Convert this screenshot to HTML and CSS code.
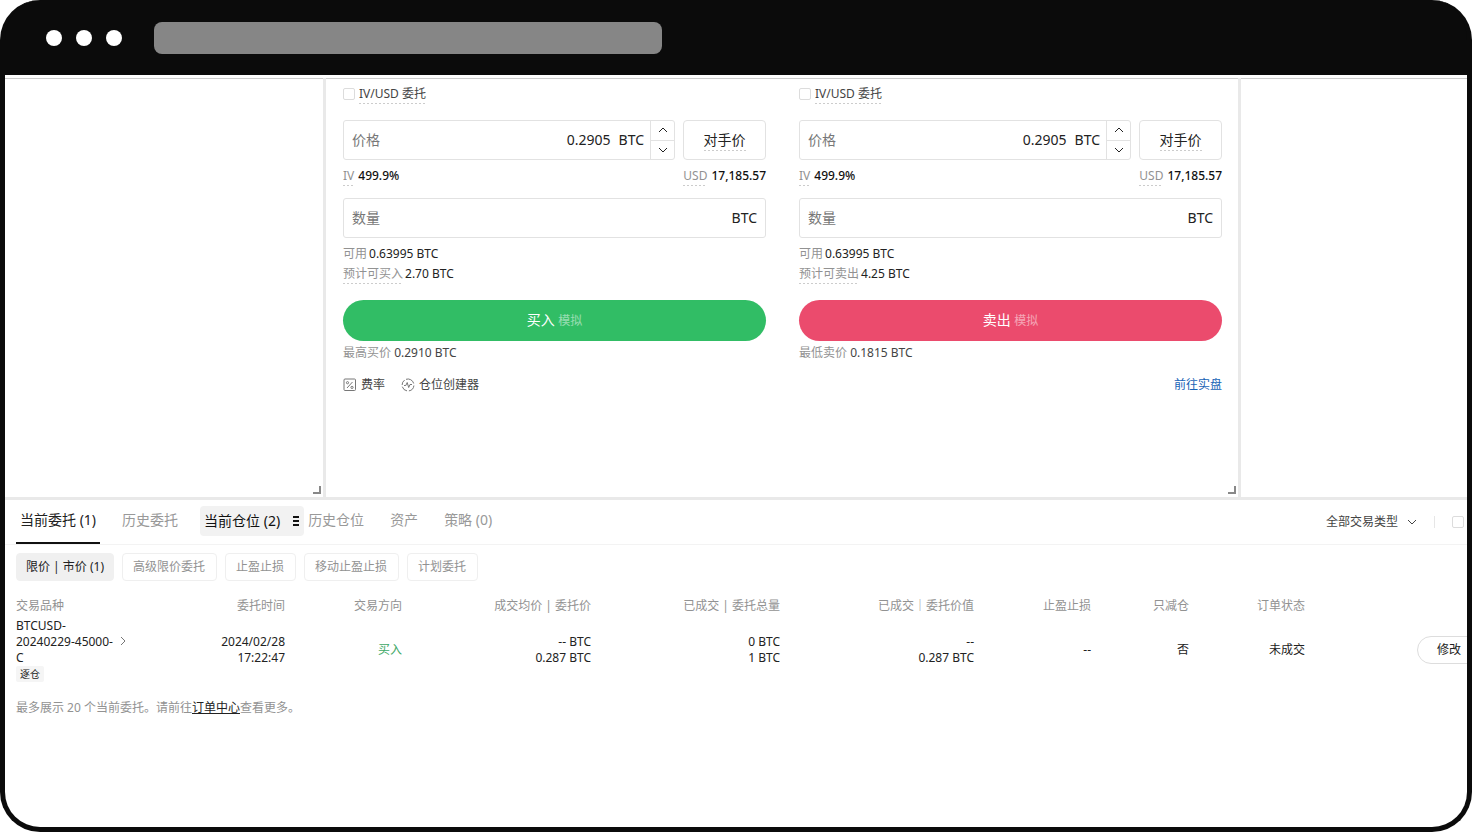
FILE: index.html
```html
<!DOCTYPE html>
<html lang="zh-CN">
<head>
<meta charset="utf-8">
<meta name="viewport" content="width=device-width, initial-scale=1">
<title>期权交易</title>
<link rel="stylesheet" href="styles.css">
</head>
<body>
<div class="window">
  <header class="titlebar">
    <div class="lights"><span class="light"></span><span class="light"></span><span class="light"></span></div>
    <div class="address"></div>
  </header>

  <div class="workspace">
    <aside class="pane">
      <svg class="resize" viewBox="0 0 8 8"><path d="M0 7h7V0"/></svg>
    </aside>

    <main class="pane pane-trade">
      <form class="order">
        <label class="check-row"><input class="checkbox" type="checkbox"><span class="hint">IV/USD 委托</span></label>
        <div class="price-row">
          <div class="field">
            <label class="field-label" for="buy-price">价格</label>
            <input class="field-input" id="buy-price" type="text" value="0.2905">
            <span class="unit">BTC</span>
            <div class="stepper">
              <button class="step" type="button" aria-label="增加"><svg class="chevron" viewBox="0 0 10 6"><path d="M1 5l4-4 4 4"/></svg></button>
              <button class="step" type="button" aria-label="减少"><svg class="chevron" viewBox="0 0 10 6"><path d="M1 1l4 4 4-4"/></svg></button>
            </div>
          </div>
          <button class="counter" type="button"><span class="hint">对手价</span></button>
        </div>
        <div class="quote-row">
          <span class="quote"><span class="muted hint">IV</span><b class="figure">499.9%</b></span>
          <span class="quote"><span class="muted hint">USD</span><b class="figure">17,185.57</b></span>
        </div>
        <div class="field field-amount">
          <label class="field-label" for="buy-amount">数量</label>
          <input class="field-input" id="buy-amount" type="text">
          <span class="unit">BTC</span>
        </div>
        <div class="info">
          <div class="info-row"><span class="muted">可用</span><span>0.63995 BTC</span></div>
          <div class="info-row"><span class="muted hint">预计可买入</span><span>2.70 BTC</span></div>
        </div>
        <button class="submit submit-buy" type="button">买入 <small class="demo">模拟</small></button>
        <div class="limit"><span class="muted">最高买价</span> 0.2910 BTC</div>
        <div class="tools">
          <a class="tool" href="#">
            <svg class="tool-icon" viewBox="0 0 14 14"><rect x="1" y="1" width="11.5" height="11.5" rx="1"/><path d="M4 10l5.500-6"/><circle cx="4.500" cy="4.700" r="1.100"/><circle cx="9" cy="9.400" r="1.100"/></svg>
            费率</a>
          <a class="tool" href="#">
            <svg class="tool-icon" viewBox="0 0 14 14"><path d="M5 1.300a6 6 0 0 1 7.700 4.200M12.900 7.500a6 6 0 0 1-5 5.400M6 12.900a6 6 0 0 1-4.700-4.200M1.100 7a6 6 0 0 1 2.500-4.900"/><path d="M3 7.500h1.800l1.400-3 1.500 5 1.300-3h2"/></svg>
            仓位创建器</a>
        </div>
      </form>

      <form class="order">
        <label class="check-row"><input class="checkbox" type="checkbox"><span class="hint">IV/USD 委托</span></label>
        <div class="price-row">
          <div class="field">
            <label class="field-label" for="sell-price">价格</label>
            <input class="field-input" id="sell-price" type="text" value="0.2905">
            <span class="unit">BTC</span>
            <div class="stepper">
              <button class="step" type="button" aria-label="增加"><svg class="chevron" viewBox="0 0 10 6"><path d="M1 5l4-4 4 4"/></svg></button>
              <button class="step" type="button" aria-label="减少"><svg class="chevron" viewBox="0 0 10 6"><path d="M1 1l4 4 4-4"/></svg></button>
            </div>
          </div>
          <button class="counter" type="button"><span class="hint">对手价</span></button>
        </div>
        <div class="quote-row">
          <span class="quote"><span class="muted hint">IV</span><b class="figure">499.9%</b></span>
          <span class="quote"><span class="muted hint">USD</span><b class="figure">17,185.57</b></span>
        </div>
        <div class="field field-amount">
          <label class="field-label" for="sell-amount">数量</label>
          <input class="field-input" id="sell-amount" type="text">
          <span class="unit">BTC</span>
        </div>
        <div class="info">
          <div class="info-row"><span class="muted">可用</span><span>0.63995 BTC</span></div>
          <div class="info-row"><span class="muted hint">预计可卖出</span><span>4.25 BTC</span></div>
        </div>
        <button class="submit submit-sell" type="button">卖出 <small class="demo">模拟</small></button>
        <div class="limit"><span class="muted">最低卖价</span> 0.1815 BTC</div>
        <div class="tools tools-end"><a class="live" href="#">前往实盘</a></div>
      </form>
      <svg class="resize" viewBox="0 0 8 8"><path d="M0 7h7V0"/></svg>
    </main>

    <aside class="pane"></aside>
  </div>

  <section class="orders">
    <div class="tabbar">
      <nav class="tabs">
        <button class="tab tab-active" type="button">当前委托 (1)</button>
        <button class="tab" type="button">历史委托</button>
        <button class="tab tab-drag" type="button">当前仓位 (2)
          <svg class="grip" viewBox="0 0 8 12"><path d="M1 2h6M1 6h6M1 10h6"/></svg></button>
        <button class="tab" type="button">历史仓位</button>
        <button class="tab" type="button">资产</button>
        <button class="tab" type="button">策略 (0)</button>
      </nav>
      <div class="filters">
        <label class="type">
          <select class="type-select" aria-label="交易类型"><option>全部交易类型</option></select>
          <svg class="chevron" viewBox="0 0 10 6"><path d="M1 1l4 4 4-4"/></svg>
        </label>
        <span class="divider"></span>
        <input class="checkbox" type="checkbox" aria-label="筛选">
      </div>
    </div>

    <div class="chips">
      <button class="chip chip-active" type="button">限价 | 市价 (1)</button>
      <button class="chip" type="button">高级限价委托</button>
      <button class="chip" type="button">止盈止损</button>
      <button class="chip" type="button">移动止盈止损</button>
      <button class="chip" type="button">计划委托</button>
    </div>

    <table class="table">
      <colgroup>
        <col class="c-name"><col class="c-time"><col class="c-side"><col class="c-wide"><col class="c-wide"><col class="c-value"><col class="c-stop"><col class="c-reduce"><col class="c-state"><col>
      </colgroup>
      <thead>
        <tr><th>交易品种</th><th>委托时间</th><th>交易方向</th><th>成交均价 | 委托价</th><th>已成交 | 委托总量</th><th>已成交｜委托价值</th><th>止盈止损</th><th>只减仓</th><th>订单状态</th><th></th></tr>
      </thead>
      <tbody>
        <tr>
          <td>
            <div class="symbol">BTCUSD-<br>20240229-45000-
              <svg class="go" viewBox="0 0 6 10"><path d="M1 1l4 4-4 4"/></svg><br>C</div>
            <span class="tag">逐仓</span>
          </td>
          <td>2024/02/28<br>17:22:47</td>
          <td class="buy">买入</td>
          <td>-- BTC<br>0.287 BTC</td>
          <td>0 BTC<br>1 BTC</td>
          <td>--<br>0.287 BTC</td>
          <td>--</td>
          <td>否</td>
          <td>未成交</td>
          <td><button class="edit" type="button">修改</button></td>
        </tr>
      </tbody>
    </table>
    <p class="note">最多展示 20 个当前委托。请前往<a class="note-link" href="#">订单中心</a>查看更多。</p>
  </section>
</div>
</body>
</html>
```
FILE: styles.css
```css
* {
  box-sizing: border-box;
}

body {
  margin: 0;
  background: #fff;
  color: #222;
  font: 12px/20px "Noto Sans", "Noto Sans CJK SC", sans-serif;
}

button,
input,
select {
  margin: 0;
  padding: 0;
  border: 0;
  background: none;
  color: inherit;
  font: inherit;
}

svg {
  fill: none;
  stroke: currentColor;
}

.window {
  display: flex;
  flex-direction: column;
  min-height: 100vh;
  overflow: hidden;
  border: solid #0b0b0b;
  border-width: 0 5px 5px;
  border-radius: 40px;
  background: #0b0b0b;
}

.titlebar {
  display: flex;
  align-items: center;
  gap: 32px;
  height: 75px;
  padding-left: 41px;
}

.lights {
  display: flex;
  gap: 14px;
}

.light {
  width: 16px;
  height: 16px;
  border-radius: 50%;
  background: #fff;
}

.address {
  flex: 0 1 508px;
  height: 32px;
  border-radius: 8px;
  background: #868686;
}

.workspace {
  display: grid;
  grid-template-columns: 318px 1fr 226px;
  gap: 3px;
  border-top: 3px solid #fff;
  border-bottom: 3px solid #e9e9e9;
  background: #e9e9e9;
}

.pane {
  position: relative;
  border-top: 1px solid #ccc;
  background: #fff;
}

.pane-trade {
  display: grid;
  grid-template-columns: 1fr 1fr;
  gap: 33px;
  padding: 5px 16px 102px 17px;
}

.resize {
  position: absolute;
  right: 2px;
  bottom: 3px;
  width: 8px;
  height: 8px;
  stroke: #888;
  stroke-width: 2;
}

.order {
  display: flex;
  flex-direction: column;
  min-width: 0;
}

.muted {
  color: #929292;
}

.hint {
  background: linear-gradient(90deg, #ccc 60%, transparent 0) 0 100% / 4px 1px repeat-x;
}

.check-row {
  display: flex;
  align-items: center;
  gap: 4px;
  color: #444;
}

.checkbox {
  flex: none;
  appearance: none;
  width: 12px;
  height: 12px;
  border: 1px solid #dcdcdc;
  border-radius: 2px;
}

.price-row {
  display: flex;
  gap: 8px;
  margin-top: 16px;
}

.field {
  display: flex;
  flex: 1;
  align-items: center;
  min-width: 0;
  height: 40px;
  border: 1px solid #e2e2e2;
  border-radius: 3px;
  padding-left: 8px;
  font-size: 14px;
}

.field-label {
  color: #777;
}

.field-input {
  flex: 1;
  min-width: 0;
  text-align: right;
}

.unit {
  padding: 0 6px 0 8px;
}

.stepper {
  display: flex;
  flex-direction: column;
  align-self: stretch;
  width: 24px;
  border-left: 1px solid #e2e2e2;
}

.step {
  display: flex;
  flex: 1;
  align-items: center;
  justify-content: center;
}

.step + .step {
  border-top: 1px solid #e2e2e2;
}

.chevron {
  width: 10px;
  height: 6px;
}

.counter {
  width: 83px;
  border: 1px solid #e2e2e2;
  border-radius: 4px;
  font-size: 14px;
}

.counter .hint {
  padding-bottom: 2px;
}

.quote-row {
  display: flex;
  justify-content: space-between;
  margin-top: 6px;
}

.quote {
  display: flex;
  gap: 4px;
}

.figure {
  font-weight: 500;
  color: #111;
}

.field-amount {
  flex: none;
  margin-top: 12px;
  padding-right: 2px;
}

.info {
  margin-top: 6px;
}

.info-row {
  display: flex;
  gap: 2px;
}

.submit {
  height: 41px;
  margin-top: 16px;
  border-radius: 21px;
  color: #fff;
  font-size: 14px;
}

.submit-buy {
  background: #31bd65;
}

.submit-sell {
  background: #eb4b6d;
}

.demo {
  font-size: 12px;
  opacity: 0.5;
}

.limit {
  margin-top: 2px;
  color: #444;
}

.tools {
  display: flex;
  gap: 16px;
  margin-top: 12px;
}

.tools-end {
  justify-content: flex-end;
}

.tool {
  display: flex;
  align-items: center;
  gap: 4px;
  color: #444;
  text-decoration: none;
}

.tool-icon {
  width: 14px;
  height: 14px;
  stroke: #777;
}

.live {
  color: #1763b6;
  text-decoration: none;
}

.orders {
  flex: 1;
  overflow: hidden;
  background: #fff;
}

.tabbar {
  display: flex;
  justify-content: space-between;
  height: 45px;
  padding-left: 11px;
  border-bottom: 1px solid #f3f3f3;
  white-space: nowrap;
}

.tabs {
  display: flex;
  align-items: flex-start;
  gap: 18px;
}

.tab {
  height: 44px;
  padding: 0 4px 4px;
  color: #999;
  font-size: 14px;
}

.tab-active {
  border-bottom: 2px solid #111;
  padding-bottom: 2px;
  color: #222;
}

.tab-drag {
  display: flex;
  align-items: center;
  gap: 12px;
  height: 30px;
  margin: 6px -18px 0 0;
  padding-bottom: 0;
  border-radius: 4px;
  background: #f2f2f2;
  color: #111;
}

.grip {
  width: 8px;
  height: 12px;
  stroke-width: 2;
}

.filters {
  display: flex;
  align-items: center;
  gap: 17px;
  padding-right: 3px;
}

.type {
  display: flex;
  align-items: center;
  gap: 8px;
  color: #444;
}

.type-select {
  appearance: none;
}

.divider {
  width: 1px;
  height: 12px;
  background: #e6e6e6;
}

.chips {
  display: flex;
  gap: 8px;
  padding: 8px 11px 0;
}

.chip {
  height: 28px;
  padding: 0 11px 0 10px;
  border: 1px solid #efefef;
  border-radius: 4px;
  color: #929292;
  white-space: nowrap;
}

.chip-active {
  padding: 0 9px;
  border-color: #f0f0f0;
  background: #f0f0f0;
  color: #222;
}

.table {
  width: 100%;
  margin-top: 14px;
  table-layout: fixed;
  border-collapse: collapse;
  line-height: 16px;
  text-align: right;
  white-space: nowrap;
}

.c-name {
  width: 151px;
}

.c-time {
  width: 129px;
}

.c-side {
  width: 117px;
}

.c-wide {
  width: 189px;
}

.c-value {
  width: 194px;
}

.c-stop {
  width: 117px;
}

.c-reduce {
  width: 98px;
}

.c-state {
  width: 116px;
}

.table th {
  height: 21px;
  padding: 0;
  color: #929292;
  font-weight: 400;
}

.table td {
  height: 68px;
  padding: 0;
}

.table th:first-child,
.table td:first-child {
  padding-left: 11px;
  text-align: left;
}

.table td:last-child {
  padding-left: 112px;
  text-align: left;
}

.go {
  width: 6px;
  height: 10px;
  margin-left: 4px;
  stroke: #777;
}

.tag {
  display: block;
  width: 28px;
  border-radius: 2px;
  background: #f5f5f5;
  font-size: 10px;
  text-align: center;
}

.table .buy {
  color: #3da866;
}

.edit {
  width: 64px;
  height: 28px;
  border: 1px solid #ddd;
  border-radius: 14px;
}

.note {
  margin: 14px 11px 0;
  color: #929292;
}

.note-link {
  color: #222;
}
```
